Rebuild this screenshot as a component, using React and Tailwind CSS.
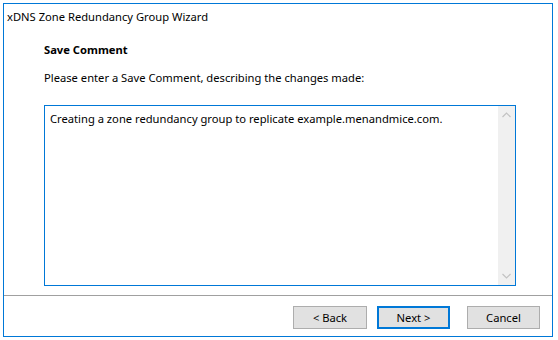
import React from 'react';

const ScrollArrow = ({ down }) => (
  <svg width="9" height="6" viewBox="0 0 9 6" className={down ? 'rotate-180' : ''}>
    <path d="M0.5 5 L4.5 1 L8.5 5" fill="none" stroke="#c2c2c2" strokeWidth="1.2" />
  </svg>
);

const App = () => {
  return (
    <div className="w-[558px] h-[340px] bg-white p-[3px] pr-[5px] pb-[3px] font-['Noto_Sans',sans-serif] text-[11.2px] text-black">
      <div className="w-[550px] h-[334px] border border-[#0078d7] flex flex-col">
        <div className="h-[28px] pl-[3px] pt-[5px] leading-[16px]">xDNS Zone Redundancy Group Wizard</div>
        <div className="flex-1 flex flex-col pl-[40px] pr-[36px]">
          <div className="mt-[10px] font-bold leading-[16px]">Save Comment</div>
          <div className="mt-[12px] leading-[16px]">Please enter a Save Comment, describing the changes made:</div>
          <div className="mt-[19px] h-[181px] border border-[#0078d7] flex">
            <div className="flex-1 pl-[5px] pt-[5px] leading-[16px]">
              Creating a zone redundancy group to replicate example.menandmice.com.
            </div>
            <div className="w-[17px] bg-[#f0f0f0] flex flex-col items-center justify-between py-[6px]">
              <ScrollArrow />
              <ScrollArrow down />
            </div>
          </div>
        </div>
        <div className="border-t border-[#a0a0a0] h-[41px] flex items-start justify-end gap-[10px] pt-[10px] pr-[12px]">
          <button className="w-[74px] h-[23px] bg-[#e1e1e1] border border-[#adadad] leading-[20px]">&lt; Back</button>
          <button className="w-[73px] h-[23px] bg-[#e1e1e1] border-2 border-[#0078d7] leading-[18px] mr-[7px]">Next &gt;</button>
          <button className="w-[73px] h-[23px] bg-[#e1e1e1] border border-[#adadad] leading-[20px]">Cancel</button>
        </div>
      </div>
    </div>
  );
};

export default App;
